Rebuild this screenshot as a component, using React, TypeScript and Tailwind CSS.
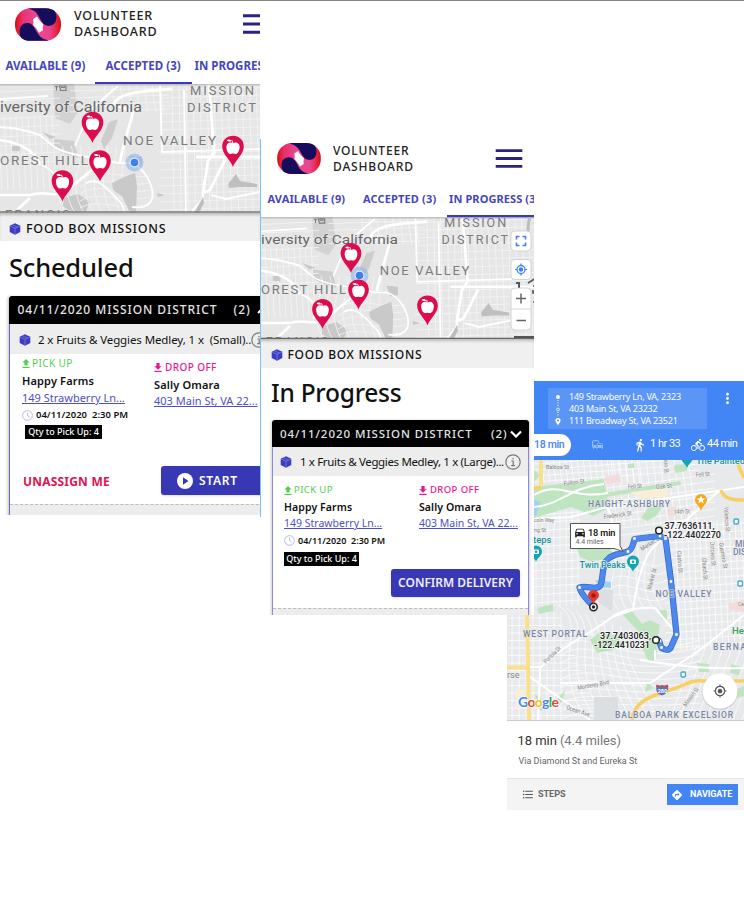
import React from "react";
import {
  MdCommute,
  MdDirections,
  MdDirectionsBike,
  MdDirectionsCar,
  MdDirectionsWalk,
  MdFormatListBulleted,
  MdMoreVert,
  MdMyLocation,
} from "react-icons/md";

const noto = "font-['Noto_Sans','Open_Sans',sans-serif]";

function Logo({ className }: { className: string }) {
  return (
    <svg viewBox="0 0 138 98" className={className}>
      <defs>
        <linearGradient id="lgA" x1="0" x2="1" y1="0" y2="0">
          <stop offset="0" stopColor="#d81010" />
          <stop offset="0.16" stopColor="#e8306e" />
          <stop offset="0.42" stopColor="#e8478f" />
          <stop offset="0.75" stopColor="#ea458c" />
          <stop offset="0.88" stopColor="#e62a50" />
          <stop offset="1" stopColor="#d80d0d" />
        </linearGradient>
      </defs>
      <rect width="138" height="98" rx="47" fill="url(#lgA)" />
      <path d="M38 2Q42 0 50 0H92C104 0 112 3 118 8C126 18 126 34 120 44C113 54 98 56 88 49C80 43 77 34 71 24C64 12 54 3 38 2Z" fill="#150c5c" />
      <path d="M100 96Q96 98 88 98H46C34 98 26 95 20 90C12 80 12 64 18 54C25 44 40 42 50 49C58 55 61 64 67 74C74 86 84 95 100 96Z" fill="#150c5c" />
      <path d="M54 33L66 25C70 33 77 41 85 48C83 55 83 62 84 66L72 74C68 66 62 57 54 51C56 45 56 39 54 33Z" fill="#fff" />
    </svg>
  );
}

function Burger({ className }: { className: string }) {
  return (
    <svg viewBox="0 0 28 20" className={className}>
      <path d="M0 1.7H28M0 10H28M0 18.3H28" stroke="#2c2280" strokeWidth="2.9" />
    </svg>
  );
}

function Cube({ className }: { className: string }) {
  return (
    <svg viewBox="0 0 12 12" className={className}>
      <path d="M6 .3L11.3 2.8V9L6 11.8L.7 9V2.8Z" fill="#3c3cc0" />
      <path d="M1 3L6 5.3L11 3M6 5.3V11.5M3.3 1.7L8.6 4.2" stroke="#8585e2" strokeWidth=".7" fill="none" />
    </svg>
  );
}

const streets: string[] = [];
for (let i = 0; i < 17; i++) streets.push(`M${172 + i * 7} 84L${174 + i * 7.2} 213`);
for (let i = 0; i < 17; i++) streets.push(`M${160} ${90 + i * 8}L290 ${86 + i * 8}`);
for (let i = 0; i < 10; i++) streets.push(`M${-2 + i * 6} 116L${2 + i * 6} 190`);
for (let i = 0; i < 9; i++) streets.push(`M0 ${92 + i * 9}L60 ${89 + i * 9}`);
for (let i = 0; i < 8; i++) streets.push(`M${104 + i * 8} 85L${108 + i * 8} 113`);
for (let i = 0; i < 4; i++) streets.push(`M70 ${91 + i * 7}L170 ${88 + i * 7}`);
for (let i = 0; i < 8; i++) streets.push(`M${i * 9 + 62} 146C${i * 8 + 70} 160 ${i * 10 + 45} 180 ${i * 9 + 66} 213`);
for (let i = 0; i < 6; i++) streets.push(`M${80} ${180 + i * 7}C100 ${165 + i * 8} 118 ${180 + i * 8} 150 ${176 + i * 7}`);

/* Greyscale street map of central San Francisco. */
function GreyMap() {
  return (
    <g fontFamily="'Roboto','Noto Sans',sans-serif">
      <rect x="-5" y="80" width="300" height="140" fill="#e6e6e6" />
      <g fill="#cfcfcf">
        <path d="M53 84H74L78 112L70 124L55 118Z" fill="#d2d2d2" />
        <path d="M54 139L74 141L78 158L62 153L52 147Z" />
        <path d="M64 198L78 194L90 202L86 211L72 213L63 206Z" fill="#c9c9c9" />
      </g>
      <path d={streets.join("")} stroke="#f3f3f3" strokeWidth=".9" fill="none" />
      <g fill="#c9c9c9">
        <path d="M112 183L124 177L135 173L137 186L136 213H130L122 196L113 190Z" />
        <path d="M109 122L118 119L112 138L104 149L101 141Z" fill="#cdcdcd" />
        <path d="M228 184L236 174L240 181L257 184V187L240 187L229 188Z" fill="#bfbfbf" />
        <path d="M42 132L56 137L50 139Z M12 146L20 145V151L12 151Z M157 193L165 195L158 197Z" />
        <path d="M130 156L142 157V166L134 167Z" />
      </g>
      <g stroke="#fff" fill="none" strokeWidth="1.8">
        <path d="M0 127C20 128 30 132 40 135L52 145C60 153 80 156 98 158L118 163H130C143 166 155 185 152 199C148 208 140 208 132 207" />
        <path d="M120 162C124 140 132 120 133 111L113 105C118 95 130 92 160 90L172 89" strokeWidth="2.8" />
        <path d="M0 140C20 143 35 150 40 165M0 195H30C45 190 55 198 66 192L82 178L98 165M14 213L30 198" strokeWidth="2.6" />
        <path d="M75 146L90 110L118 86M0 99L48 96M160 86L162 152L260 149M184 90L186 213" />
        <path d="M209 84L214 152L208 161L203 193L210 190L225 160M196 157H290" strokeWidth="2.8" />
        <path d="M203 193C204 203 194 206 192 213M260 192L226 199L211 195" strokeWidth="2" />
        <path d="M86 183C100 175 112 195 122 204L125 213M42 165C54 170 60 180 54 191" />
      </g>
      <path d="M203 197L194 213H199L204 203Z" fill="#bdbdbd" />
      <g fill="#7b7b7b" fontSize="14" stroke="#ebebeb" strokeWidth="1.5" strokeOpacity=".8" paintOrder="stroke">
        <text x="0" y="112" textLength="142" lengthAdjust="spacingAndGlyphs" fill="#666">iversity of California</text>
        <text x="190" y="95" textLength="64" fontSize="13">MISSION</text>
        <text x="187" y="112" textLength="69" fontSize="13">DISTRICT</text>
        <text x="123" y="145" textLength="93" fontSize="13.5">NOE VALLEY</text>
        <text x="0" y="165" textLength="88" fontSize="13.5">OREST HILL</text>
        <text x="5" y="218.500" textLength="65" fontSize="13">FRANCIS</text>
      </g>
      <path d="M55 86.500H58M56.500 86.500V90.500M59.500 86H66V90.500H60.500ZM61 87.500H65" stroke="#7d7d7d" fill="none" strokeWidth="1.2" />
    </g>
  );
}

function Pin({ x, y, s = 1 }: { x: number; y: number; s?: number }) {
  return (
    <g transform={`translate(${x} ${y}) scale(${s})`}>
      <path d="M0 0C-1.5-6-10.8-12.5-10.8-20.5C-10.8-27-6-31.3 0-31.3S10.8-27 10.8-20.5C10.8-12.5 1.5-6 0 0Z" fill="#dd0c4c" />
      <path d="M0-23.800C-2.600-25.600-6.800-24.500-6.600-19.800C-6.400-16-4.600-13-2.400-13C-1-13-.8-13.400 0-13.400S1-13 2.400-13C4.600-13 6.400-16 6.600-19.800C6.800-24.500 2.600-25.600 0-23.800Z" fill="#fff" />
      <path d="M-.2-23.500C-.2-25-.6-26-1.200-26.800" fill="none" stroke="#fff" strokeWidth="1" />
      <path d="M-6.200-26.800C-4.800-28-2.200-27.800-1.400-25.800C-3.400-25-5.400-25.400-6.200-26.800Z" fill="#fff" />
    </g>
  );
}

function Dot({ x, y }: { x: number; y: number }) {
  return (
    <g>
      <circle cx={x} cy={y} r="9" fill="#8db4ee" opacity=".6" />
      <circle cx={x} cy={y} r="5" fill="#fff" opacity=".7" />
      <circle cx={x} cy={y} r="3.8" fill="#3a80f2" />
    </g>
  );
}

function Arrow({ up, className }: { up?: boolean; className: string }) {
  return (
    <svg viewBox="0 0 8 9" className={className} fill="currentColor">
      {up ? <path d="M4 0L7.6 3.6H5.6V6.6H2.4V3.6H.4Z" /> : <path d="M4 6.8L.4 3.3H2.4V0H5.6V3.3H7.6Z" />}
      <path d="M.4 7.8H7.6V9H.4Z" />
    </svg>
  );
}

function Clock() {
  return (
    <svg viewBox="0 0 12 12" className="h-[11px] w-[11px] shrink-0" fill="none" stroke="#a9a9ea" strokeWidth=".9">
      <circle cx="6" cy="6" r="5.3" />
      <path d="M6 2.8V6.2L8.4 7.8" />
    </svg>
  );
}

function Info({ className }: { className: string }) {
  return (
    <svg viewBox="0 0 16 16" className={className} fill="none" stroke="#777" strokeWidth="1.2">
      <circle cx="8" cy="8" r="7.2" />
      <path d="M6.5 7H8.2V11.5M6.2 11.6H10M8 3.9V5.3" />
    </svg>
  );
}

function Scheduled() {
  return (
    <section className={`absolute left-0 top-0 h-[515px] w-[260px] overflow-hidden bg-white text-[#111] ${noto}`}>
      <header className="flex h-[48px] items-center pl-[15px]">
        <Logo className="h-[33px] w-[46px] shrink-0" />
        <h1 className="ml-[13px] w-[169px] shrink-0 text-[12.5px] leading-[16.5px] font-medium tracking-[0.8px] text-[#222]">
          VOLUNTEER<br />DASHBOARD
        </h1>
        <Burger className="h-[20px] w-[28px] shrink-0" />
      </header>
      <nav className="flex h-[36px] text-[11.5px] leading-[35px] font-bold whitespace-nowrap text-[#4646c0]">
        <span className="w-[95px] shrink-0 pl-[5.500px] tracking-[0.05px]">AVAILABLE (9)</span>
        <span className="w-[97px] shrink-0 border-b-2 border-[#3b3bb0] pl-[10.5px] tracking-[0.05px]">ACCEPTED (3)</span>
        <span className="shrink-0 pl-[2.5px] tracking-[0px]">IN PROGRESS (3)</span>
      </nav>
      <svg viewBox="0 84 260 129" className="block h-[129px] w-[260px]">
        <GreyMap />
        <path d="M0 84.5H260" stroke="#777" strokeOpacity=".35" strokeWidth="2" />
        <path d="M0 212H260" stroke="#777" strokeWidth="1.5" />
        <Dot x={134.5} y={162.5} />
        <Pin x={92.5} y={143} />
        <Pin x={62.5} y={201.5} />
        <Pin x={100} y={181.5} />
        <Pin x={233} y={167} />
      </svg>
      <div className="flex h-[28px] items-center bg-[#f0f0f0] pt-[3px] pl-[9px] shadow-[inset_0_3px_3px_-1px_#bbb]">
        <Cube className="h-[12px] w-[12px]" />
        <span className="ml-[5px] text-[12.5px] leading-[16px] font-medium tracking-[0.75px]">FOOD BOX MISSIONS</span>
      </div>
      <h2 className="h-[55px] pl-[9px] text-[25.5px] leading-[52px] font-medium tracking-[-0.2px]">Scheduled</h2>
      <div className="ml-[9px] w-[270px] shadow-[-1px_1px_3px_#bbb]">
        <div className="flex h-[28px] items-center rounded-tl-[3px] bg-black pl-[8.500px] text-[12px] font-medium whitespace-nowrap text-[#e4e4e4]">
          <span className="w-[216px] tracking-[0.950px]">04/11/2020 MISSION DISTRICT</span>
          <span className="tracking-[0.9px]">(2)</span>
          <svg viewBox="0 0 12 8" className="ml-[6px] h-[8px] w-[12px]" fill="none" stroke="#fff" strokeWidth="2"><path d="M1 7L6 2L11 7" /></svg>
        </div>
        <div className="border-l border-[#6a6ac4]">
          <div className="flex h-[30px] items-center bg-[#ededed] pt-[2px] pl-[9px] text-[11.5px] whitespace-nowrap">
            <Cube className="h-[12px] w-[12px] shrink-0" />
            <span className="ml-[7px] w-[213px] shrink-0 tracking-[-0.1px]">2 x Fruits &amp; Veggies Medley, 1 x &nbsp;(Small)..</span>
            <Info className="h-[16px] w-[16px] shrink-0" />
          </div>
          <div className="flex h-[112px] pl-[12px] whitespace-nowrap">
            <div className="w-[132px] pt-[1px]">
              <div className="flex h-[17px] items-center text-[#52cf52]">
                <Arrow up className="h-[9px] w-[8px]" />
                <span className="ml-[2px] text-[10px] tracking-[0.4px]">PICK UP</span>
              </div>
              <div className="h-[18px] text-[11px] leading-[17px] font-semibold tracking-[0.15px]">Happy Farms</div>
              <div className="h-[17px] text-[11px] leading-[16px] text-[#4f4fc4] underline">149 Strawberry Ln...</div>
              <div className="flex h-[17px] items-center">
                <Clock />
                <span className="ml-[3px] text-[9.5px] font-semibold">04/11/2020 &nbsp;2:30 PM</span>
              </div>
              <div className="mt-[1px] ml-[3px] h-[14px] w-[77px] bg-black text-center text-[9px] leading-[14px] font-medium text-white">Qty to Pick Up: 4</div>
            </div>
            <div className="pt-[4px]">
              <div className="flex h-[18px] items-center text-[#ec1690]">
                <Arrow className="h-[9px] w-[8px]" />
                <span className="ml-[3px] text-[10px] font-medium tracking-[0.4px]">DROP OFF</span>
              </div>
              <div className="h-[17px] text-[11px] leading-[17px] font-semibold tracking-[0.15px]">Sally Omara</div>
              <div className="text-[11px] leading-[16px] text-[#4f4fc4] underline">403 Main St, VA 22...</div>
            </div>
          </div>
          <div className="flex h-[38px] items-start pl-[13px]">
            <button className="w-[138px] text-left text-[12px] leading-[31px] font-bold tracking-[0.2px] whitespace-nowrap text-[#e01450]">UNASSIGN ME</button>
            <button className="flex h-[29px] w-[116px] items-center rounded-[3px] bg-[#3838b4] pl-[16px] text-[12px] font-semibold text-white shadow-sm">
              <svg viewBox="0 0 16 16" className="h-[16px] w-[16px]"><circle cx="8" cy="8" r="8" fill="#fff" /><path d="M6 4.2L11.5 8L6 11.8Z" fill="#3838b4" /></svg>
              <span className="ml-[6px] tracking-[0.7px]">START</span>
            </button>
          </div>
          <div className="h-[12px] border-t border-dashed border-[#bbb] bg-[#ededed]" />
        </div>
      </div>
    </section>
  );
}

function InProgress() {
  return (
    <section className={`absolute left-[260px] top-[139px] h-[476px] w-[274px] overflow-hidden bg-white text-[#111] ${noto}`}>
      <header className="flex h-[39px] items-center pl-[17px]">
        <Logo className="h-[31px] w-[44px] shrink-0" />
        <h1 className="ml-[12px] w-[162px] shrink-0 text-[12px] leading-[16px] font-medium tracking-[0.850px] text-[#222]">
          VOLUNTEER<br />DASHBOARD
        </h1>
        <Burger className="h-[19px] w-[28px] shrink-0" />
      </header>
      <nav className="flex h-[39px] text-[11px] leading-[42px] font-bold whitespace-nowrap text-[#4646c0]">
        <span className="w-[103px] shrink-0 pl-[7.500px] tracking-[0.15px]">AVAILABLE (9)</span>
        <span className="w-[84px] shrink-0 tracking-[0.15px]">ACCEPTED (3)</span>
        <span className="shrink-0 border-b-2 border-[#3b3bb0] pl-[2px] tracking-[0.1px]">IN PROGRESS (3)</span>
      </nav>
      <svg viewBox="260 217 274 122" className="block h-[122px] w-[274px]">
        <g transform="translate(261 136.5) scale(.965 .957)"><GreyMap /></g>
        <path d="M260 217.5H534" stroke="#777" strokeOpacity=".35" strokeWidth="2" />
        <path d="M260 338.5H534" stroke="#666" strokeWidth="1.5" />
        <path d="M447 217.3H534" stroke="#9a9ad8" strokeWidth="1" />
        <Pin x={351} y={273} s={0.96} />
        <Dot x={359.5} y={275.5} />
        <Pin x={322.5} y={329} s={0.96} />
        <Pin x={358.5} y={309.5} s={0.96} />
        <Pin x={427.5} y={325.5} s={0.96} />
        <path d="M530 217C526 228 530 235 526 245" stroke="#bcbcbc" strokeWidth="3" fill="none" />
        <path d="M514 337H534M516 283H519V290" stroke="#555" strokeWidth="2" fill="none" />
        <path d="M536 278L528 283M533 286H538M533 290V293H537M533 302H537" stroke="#555" strokeWidth="1.600" fill="none" />
        <g fill="#fff" stroke="#ccc" strokeWidth=".8">
          <rect x="511" y="231" width="20" height="20" rx="4" />
          <rect x="511" y="259.500" width="20" height="20" rx="4" />
          <rect x="511" y="288" width="20" height="42" rx="4" />
          <path d="M511 309H531" />
        </g>
        <g fill="none" stroke="#3d83f0" strokeWidth="1.6">
          <path d="M516.500 239.500V236.500H519.500M522.500 236.500H525.500V239.500M525.500 242.500V245.500H522.500M519.500 245.500H516.500V242.500" />
          <circle cx="521" cy="269.500" r="4" strokeWidth="1.3" />
          <path d="M521 263.500V265.500M521 273.500V275.500M515 269.500H517M525 269.500H527" strokeWidth="1.2" />
          <circle cx="521" cy="269.500" r="1.400" fill="#3d83f0" />
        </g>
        <path d="M516 298.500H526M521 293.500V303.500M516.500 320.500H526" stroke="#666" strokeWidth="1.5" />
      </svg>
      <div className="flex h-[29px] items-center bg-[#f0f0f0] pt-[3px] pl-[11px] shadow-[inset_0_3px_3px_-1px_#bbb]">
        <Cube className="h-[12px] w-[12px]" />
        <span className="ml-[4.500px] text-[12px] leading-[16px] font-medium tracking-[0.720px]">FOOD BOX MISSIONS</span>
      </div>
      <h2 className="h-[52px] pl-[11px] text-[24.5px] leading-[49px] font-medium tracking-[-0.250px]">In Progress</h2>
      <div className="ml-[12px] w-[257px] shadow-[0_1px_3px_#aaa]">
        <div className="flex h-[27px] items-center rounded-t-[3px] bg-black pl-[8px] text-[11.5px] font-medium whitespace-nowrap text-[#e4e4e4]">
          <span className="w-[211px] tracking-[0.950px]">04/11/2020 MISSION DISTRICT</span>
          <span className="tracking-[0.9px]">(2)</span>
          <svg viewBox="0 0 12 8" className="ml-[3px] h-[8px] w-[12px]" fill="none" stroke="#fff" strokeWidth="2.2"><path d="M1 1.500L6 6.500L11 1.500" /></svg>
        </div>
        <div className="border-x border-[#8a8ad6]">
          <div className="flex h-[29px] items-center bg-[#ededed] pl-[7px] text-[11.5px] whitespace-nowrap">
            <Cube className="h-[12px] w-[12px] shrink-0" />
            <span className="ml-[8px] w-[205px] shrink-0 tracking-[-0.350px]">1 x Fruits &amp; Veggies Medley, 1 x (Large)...</span>
            <Info className="h-[16px] w-[16px] shrink-0" />
          </div>
          <div className="flex h-[93px] pt-[6px] pl-[11px] whitespace-nowrap">
            <div className="w-[135px]">
              <div className="flex h-[17px] items-center text-[#52cf52]">
                <Arrow up className="h-[9px] w-[8px]" />
                <span className="ml-[2px] text-[9.5px] tracking-[0.4px]">PICK UP</span>
              </div>
              <div className="h-[17px] text-[10.5px] leading-[17px] font-semibold tracking-[0.1px]">Happy Farms</div>
              <div className="h-[16px] text-[10.5px] leading-[15px] text-[#4f4fc4] underline">149 Strawberry Ln...</div>
              <div className="flex h-[17px] items-center">
                <Clock />
                <span className="ml-[3px] text-[9px] font-semibold">04/11/2020 &nbsp;2:30 PM</span>
              </div>
              <div className="mt-[3px] h-[14px] w-[75px] bg-black text-center text-[9px] leading-[14px] font-medium text-white">Qty to Pick Up: 4</div>
            </div>
            <div>
              <div className="flex h-[17px] items-center text-[#ec1690]">
                <Arrow className="h-[9px] w-[8px]" />
                <span className="ml-[3px] text-[9.5px] font-medium tracking-[0.4px]">DROP OFF</span>
              </div>
              <div className="h-[17px] text-[10.5px] leading-[17px] font-semibold tracking-[0.1px]">Sally Omara</div>
              <div className="text-[10.5px] leading-[15px] text-[#4f4fc4] underline">403 Main St, VA 22...</div>
            </div>
          </div>
          <div className="flex h-[39px] justify-end pr-[8px]">
            <button className="h-[28px] w-[129px] rounded-[3px] bg-[#3838b4] text-[12px] leading-[28px] font-semibold whitespace-nowrap text-[#eeeefa] shadow-sm">CONFIRM DELIVERY</button>
          </div>
          <div className="h-[10px] border-t border-dashed border-[#bbb] bg-[#ededed]" />
        </div>
      </div>
    </section>
  );
}

const minor: string[] = [];
for (let i = 0; i < 17; i++) minor.push(`M${541 + i * 6} 459L${544 + i * 6} 483`);
for (let i = 0; i < 4; i++) minor.push(`M534 ${464 + i * 6}L700 ${452 + i * 6}`);
for (let i = 0; i < 12; i++) minor.push(`M${611 + i * 7} 459L${617 + i * 7.3} 525`);
for (let i = 0; i < 8; i++) minor.push(`M607 ${488 + i * 7}L715 ${474 + i * 7}`);
for (let i = 0; i < 13; i++) minor.push(`M${675 + i * 6} 520L${681 + i * 6} 650`);
for (let i = 0; i < 17; i++) minor.push(`M665 ${528 + i * 7.5}L744 ${523 + i * 7.5}`);
for (let i = 0; i < 12; i++) minor.push(`M534 ${515 + i * 8}L580 ${512 + i * 8}`);
for (let i = 0; i < 8; i++) minor.push(`M${536 + i * 6} 510V606`);
for (let i = 0; i < 14; i++) minor.push(`M508 ${618 + i * 7.5}H${560 + i * 3}`);
for (let i = 0; i < 8; i++) minor.push(`M${512 + i * 7} 612V720`);
for (let i = 0; i < 9; i++) minor.push(`M${558 + i * 9} ${605 + i * 3}C${590 + i * 4} ${625 + i * 4} ${550 + i * 10} ${660} ${582 + i * 9} 712`);
for (let i = 0; i < 11; i++) minor.push(`M560 ${640 + i * 8}C590 ${615 + i * 9} 620 ${665 + i * 5} 700 ${640 + i * 7}`);
for (let i = 0; i < 10; i++) minor.push(`M${670 + i * 9} 720L${697 + i * 9} 645`);
for (let i = 0; i < 6; i++) minor.push(`M${610 + i * 9} 545C${625 + i * 6} 565 ${600 + i * 9} 585 ${618 + i * 9} 610`);
for (let i = 0; i < 5; i++) minor.push(`M612 ${560 + i * 9}C630 ${550 + i * 10} 650 ${575 + i * 8} 666 ${562 + i * 9}`);

const nodes = [
  [634.5, 538.5], [628, 551.5], [660, 536], [665.5, 538.5], [671, 581.5],
  [676.5, 634.5], [661.5, 647.5], [579.5, 587.5], [660, 641],
];

const route =
  "M593 606C588 600 581 595 579.5 587.5C588 585 596 591 600.500 585.500C603 580 602 567 606 561C611 554 621 554 628 551.5C633 549 633 544 634.5 539L660 536L665.5 538.5L671 581L676.5 634.5L671 647C669 651 665 650 661.5 648L659 641";

function Street({ x, y, w, r = 0, children }: { x: number; y: number; w: number; r?: number; children: string }) {
  return (
    <text x={x} y={y} textLength={w} lengthAdjust="spacingAndGlyphs" transform={`rotate(${r} ${x} ${y})`}>
      {children}
    </text>
  );
}

function TealPin({ x, y }: { x: number; y: number }) {
  return (
    <g transform={`translate(${x} ${y})`}>
      <path d="M0 0C-1-4-6-6-6-10.500A6 6 0 0 1 6-10.500C6-6 1-4 0 0Z" fill="#12a5b5" />
      <rect x="-3" y="-12.500" width="6" height="4.500" rx="1" fill="#fff" />
      <circle cy="-10.200" r="1.300" fill="#12a5b5" />
    </g>
  );
}

function RouteMap() {
  return (
    <svg viewBox="507 460 237 260" className="block h-[260px] w-[237px]" fontFamily="'Roboto',sans-serif">
      <rect x="507" y="459" width="237" height="262" fill="#e8e9eb" />
      <path d={minor.join("")} stroke="#fff" strokeOpacity=".7" strokeWidth="1" fill="none" />
      <g fill="#bfe5c0">
        <path d="M534 487L604 479L609 508L593 516L584 512L571 507L534 518Z" />
        <path d="M604 493L680 481L681 485L606 497Z" />
        <path d="M641 518L648 508L664 505L656 516L647 521Z" />
        <path d="M577 549L584 535L602 538L612 552L602 560L590 561L580 557Z" />
        <path d="M622 614L632 611L642 624L650 620L660 625L658 636L656 660L649 662L642 648L648 640L637 630Z" />
        <path d="M590 640L600 632L618 636L622 645L612 650L597 653Z" />
        <path d="M674 465L687 464V471L675 473ZM628 464L634 463V468H628ZM534 470L540 475L534 482Z" />
        <path d="M537 608L553 604V611L539 614ZM660 610H667V619H661ZM535 694L543 700L542 711L537 708ZM558 697L565 691L563 701L557 706ZM731 664L741 667L739 675L730 673ZM697 663L709 664V672L699 672ZM647 682L654 688L645 692ZM735 690L744 686V696L738 698Z" />
      </g>
      <path d="M534 500L541 502L536 516L534 515ZM595 580L611 582V588L600 587Z" fill="#9fd3f4" />
      <path d="M604 477L620 474L621 482L606 484ZM667 508L676 506L677 515L668 516ZM728 604L744 600V612L730 610Z" fill="#f3dcdc" />
      <path d="M516 689H527V708H516ZM630 492L668 488V496L640 499Z" fill="#f8efd8" />
      <path d="M594 589L613 590L612 611L600 604ZM594 697H618V720H594Z" fill="#dcdfe2" />
      <g stroke="#fff" fill="none" strokeWidth="2">
        <path d="M534 519L571 517L607 507L744 487M534 495C560 480 570 500 608 493M534 507C560 505 570 487 604 484M607 508C620 525 600 545 625 555" />
        <path d="M720 490L668 536C650 545 640 560 633 610L612 617C590 635 570 640 540 668L538 720M612 617C620 610 640 607 655 608L676 633" />
        <path d="M507 667H540M560 683H650L700 650L744 615M530 677L570 705L590 720M640 660C655 662 690 670 744 668M655 660V650" />
      </g>
      <g fill="none">
        <path d="M541 459V487M507 667.500H530M527 614L529 720" stroke="#fae08a" strokeWidth="4" />
        <path d="M534 488H541M736 460L744 478M721 490C724 500 735 500 744 500M632 720C634 700 655 695 670 690C685 686 690 679 704 681L744 681" stroke="#f9cf62" strokeWidth="3.500" />
      </g>
      <g fill="#858585" fontSize="6.200" stroke="#f0f0f0" strokeWidth="1" strokeOpacity=".7" paintOrder="stroke">
        <Street x={546} y={469} w={23}>Balboa St</Street>
        <Street x={564} y={486} w={21} r={-8}>Fulton St</Street>
        <Street x={628} y={489} w={14} r={-5}>Fell St</Street>
        <Street x={656} y={489} w={16} r={-5}>Oak St</Street>
        <Street x={696} y={477} w={14} r={-5}>Fell St</Street>
        <Street x={674} y={514} w={16} r={-3}>14th St</Street>
        <Street x={604} y={519} w={28} r={-8}>Frederick St</Street>
        <Street x={534} y={522} w={20}>coln Way</Street>
        <Street x={534} y={532} w={12}>ng St</Street>
        <Street x={642} y={551} w={22} r={-32}>Market St</Street>
        <Street x={651} y={590} w={22} r={-75}>Market St</Street>
        <Street x={677} y={551} w={22} r={86}>Castro St</Street>
        <Street x={702} y={558} w={22} r={86}>Church St</Street>
        <Street x={710} y={542} w={24} r={86}>Dolores St</Street>
        <Street x={719} y={543} w={26} r={80}>Guerrero St</Street>
        <Street x={724} y={507} w={25} r={86}>Valencia St</Street>
        <Street x={546} y={664} w={22} r={-45}>Portola Dr</Street>
        <Street x={578} y={690} w={32} r={-11}>Monterey Blvd</Street>
        <Street x={566} y={709} w={24} r={19}>Ocean Ave</Street>
        <Street x={686} y={707} w={22} r={-54}>Mission St</Street>
        <Street x={664} y={460} w={13} r={88}>ero St</Street>
        <Street x={738} y={606} w={6}>Ce</Street>
        <text x="507" y="678" fontSize="9">rse</text>
      </g>
      <TealPin x={536} y={562} />
      <TealPin x={687} y={468} />
      <path d="M701 511C700 506 695 504 695 500A6 6 0 0 1 707 500C707 504 702 506 701 511Z" fill="#f6a81c" />
      <path d="M701 495.500L702.200 498.400L705.200 498.600L702.900 500.500L703.700 503.500L701 501.800L698.300 503.500L699.100 500.500L696.800 498.600L699.800 498.400Z" fill="#fff" />
      <g fill="#fff" stroke="#4aa7cc" strokeWidth="1.400">
        <rect x="734" y="519" width="4.500" height="5" rx="1" />
        <rect x="738" y="581" width="4.500" height="5" rx="1" />
        <rect x="681" y="672" width="4.500" height="5" rx="1" />
      </g>
      <path d={route} stroke="#3568c4" strokeWidth="6.200" strokeLinejoin="round" strokeLinecap="round" fill="none" />
      <path d={route} stroke="#4c88ee" strokeWidth="4.800" strokeLinejoin="round" strokeLinecap="round" fill="none" />
      <g fill="#fff" stroke="#3b6cc0" strokeWidth=".6">
        {nodes.map(([x, y]) => <rect key={`${x}`} x={x - 1.7} y={y - 1.7} width="3.400" height="3.400" rx=".7" />)}
      </g>
      <g fill="#7787a3" fontSize="8.500" fontWeight="500" stroke="#eef0f2" strokeWidth="1.200" strokeOpacity=".7" paintOrder="stroke">
        <text x="588" y="506.500" textLength="82">HAIGHT-ASHBURY</text>
        <text x="655.500" y="596.500" textLength="56">NOE VALLEY</text>
        <text x="523" y="637" textLength="64">WEST PORTAL</text>
        <text x="713" y="650" textLength="33">BERNA</text>
        <text x="735" y="546.500">MIS</text>
        <text x="733" y="555">DIST</text>
        <text x="615" y="718" textLength="118">BALBOA PARK EXCELSIOR</text>
      </g>
      <g fill="#20929d" fontSize="9.500" fontWeight="500" stroke="#eef4f2" strokeWidth="1.500" paintOrder="stroke">
        <text x="696" y="464" textLength="49">The Painted</text>
        <text x="533" y="542.500">teps</text>
        <text x="579.500" y="568" textLength="46" lengthAdjust="spacingAndGlyphs">Twin Peaks</text>
        <text x="732" y="634" fill="#3b9b60">Hei</text>
      </g>
      <TealPin x={633} y={572} />
      <g fill="#fff" stroke="#222" strokeWidth="1.500">
        <circle cx="659" cy="530.500" r="3.300" />
        <circle cx="656" cy="640" r="3.300" />
        <circle cx="593.500" cy="607" r="3.700" />
      </g>
      <circle cx="593.500" cy="607" r="1.700" fill="#222" />
      <path d="M593.500 605C593 600 588 599 588 595.500A5.500 5.500 0 0 1 599 595.500C599 599 594 600 593.500 605Z" fill="#e53b30" />
      <circle cx="593.500" cy="595.500" r="2.200" fill="#a01a14" />
      <path d="M570.500 523.500H620V545.500L623 551.500L614 548.500H570.500Z" fill="#fff" stroke="#555" strokeWidth="1" />
      <MdDirectionsCar x={573.5} y={526} size={13} color="#222" />
      <text x="588" y="535.800" fontSize="9.200" fontWeight="600" fill="#222" textLength="27.500">18 min</text>
      <text x="575.500" y="544" fontSize="7" fill="#666" textLength="28">4.4 miles</text>
      <g fill="#2a2a2a" fontSize="9" fontWeight="600" stroke="#fff" strokeWidth="1.500" strokeOpacity=".8" paintOrder="stroke">
        <text x="664.500" y="528.700" textLength="50">37.7636111,</text>
        <text x="664" y="538" textLength="57">-122.4402270</text>
        <text x="600" y="638.700" textLength="51">37.7403063,</text>
        <text x="594" y="648" textLength="56">-122.4410231</text>
      </g>
      <path d="M657 685C659 686 660.500 686 662 685C664 686 666 686 668 685C669 690 667 694 662 695.500C657 694 655 690 657 685Z" fill="#5877b8" />
      <path d="M656.500 684.500Q662 687 668 684.500L668.300 687H656Z" fill="#d44b43" />
      <text x="657.700" y="692.500" fontSize="5.500" fontWeight="700" fill="#fff">280</text>
      <text x="518" y="706.500" fontSize="14" fontWeight="700" textLength="41" stroke="#fff" strokeWidth="1.500" paintOrder="stroke" fontFamily="'Lato',sans-serif">
        <tspan fill="#4285f4">G</tspan><tspan fill="#ea4335">o</tspan><tspan fill="#fbbc05">o</tspan><tspan fill="#4285f4">g</tspan><tspan fill="#34a853">l</tspan><tspan fill="#ea4335">e</tspan>
      </text>
      <circle cx="720" cy="692" r="18" fill="#777" opacity=".2" />
      <circle cx="720" cy="691" r="17.500" fill="#fff" />
      <MdMyLocation x={713} y={684} size={14} color="#555" />
    </svg>
  );
}

function Directions() {
  return (
    <section className="absolute left-[507px] top-[381px] h-[429px] w-[237px] overflow-hidden bg-white font-['Roboto',sans-serif]">
      <div className="h-[79px] bg-[#4285f4] pl-[27px] text-white">
        <div className="flex pt-[7px]">
          <div className="ml-[14px] flex h-[41px] w-[159px] bg-[#5b96f6] pt-[2.500px]">
            <svg viewBox="0 0 8 36" className="ml-[6px] h-[36px] w-[8px]" fill="#fff">
              <circle cx="4" cy="6" r="2" />
              <path d="M4 9V16M4 21V26" stroke="#fff" strokeWidth="1" strokeDasharray="1 1.500" />
              <circle cx="4" cy="18.500" r="1.400" fill="none" stroke="#fff" strokeWidth=".8" />
              <path d="M4 34.500C3.500 32.500 1.400 31.500 1.400 29.500A2.600 2.600 0 0 1 6.600 29.500C6.600 31.500 4.500 32.500 4 34.500Z" />
              <circle cx="4" cy="29.500" r=".9" fill="#4285f4" />
            </svg>
            <div className={`ml-[7px] text-[9px] leading-[12px] whitespace-nowrap ${noto}`}>
              <div className="tracking-[-0.220px]">149 Strawberry Ln, VA, 2323</div>
              <div className="tracking-[-0.220px]">403 Main St, VA 23232</div>
              <div className="tracking-[-0.220px]">111 Broadway St, VA 23521</div>
            </div>
          </div>
          <MdMoreVert className="mt-[2px] ml-[12px] h-[17px] w-[17px]" />
        </div>
        <div className="mt-[4px] flex h-[23px] items-center text-[11px] whitespace-nowrap">
          <span className="h-[22px] w-[37px] rounded-r-full bg-white text-[10.500px] leading-[22px] font-medium tracking-[-0.300px] text-[#4285f4]">18 min</span>
          <MdCommute className="ml-[20px] h-[13px] w-[13px] opacity-50" />
          <MdDirectionsWalk className="ml-[29px] h-[14px] w-[14px]" />
          <span className="ml-[3px] w-[41px] tracking-[-0.500px]">1 hr 33</span>
          <MdDirectionsBike className="h-[14px] w-[14px]" />
          <span className="ml-[2px] tracking-[-0.550px]">44 min</span>
        </div>
      </div>
      <RouteMap />
      <div className="h-[58px] border-t border-[#ccc] pt-[11px] pl-[10.500px]">
        <p className="text-[13px] leading-[18px] tracking-[-0.050px] text-[#777]"><span className="text-[#333]">18 min</span> (4.4 miles)</p>
        <p className="mt-[4px] ml-[1px] text-[9px] leading-[14px] text-[#666]">Via Diamond St and Eureka St</p>
      </div>
      <footer className="flex h-[32px] items-center border-t border-[#e6e6e6] bg-[#f4f4f4] pl-[14px]">
        <MdFormatListBulleted className="h-[13px] w-[14px] text-[#555]" />
        <span className="ml-[3px] w-[129px] text-[9px] font-bold text-[#666]">STEPS</span>
        <button className="flex h-[21px] w-[71px] items-center bg-[#4285f4] pl-[4px] text-[9px] font-bold text-white">
          <MdDirections className="h-[12px] w-[12px]" />
          <span className="ml-[7px] tracking-[-0.100px]">NAVIGATE</span>
        </button>
      </footer>
    </section>
  );
}

export default function App() {
  return (
    <main className="relative h-[902px] w-[744px] overflow-hidden bg-white">
      <Directions />
      <Scheduled />
      <InProgress />
      <div className="absolute left-[260px] top-[139px] h-[378px] w-px bg-[#74c6f8]" />
      <div className="absolute left-0 top-0 h-px w-full bg-[#858585]" />
    </main>
  );
}
